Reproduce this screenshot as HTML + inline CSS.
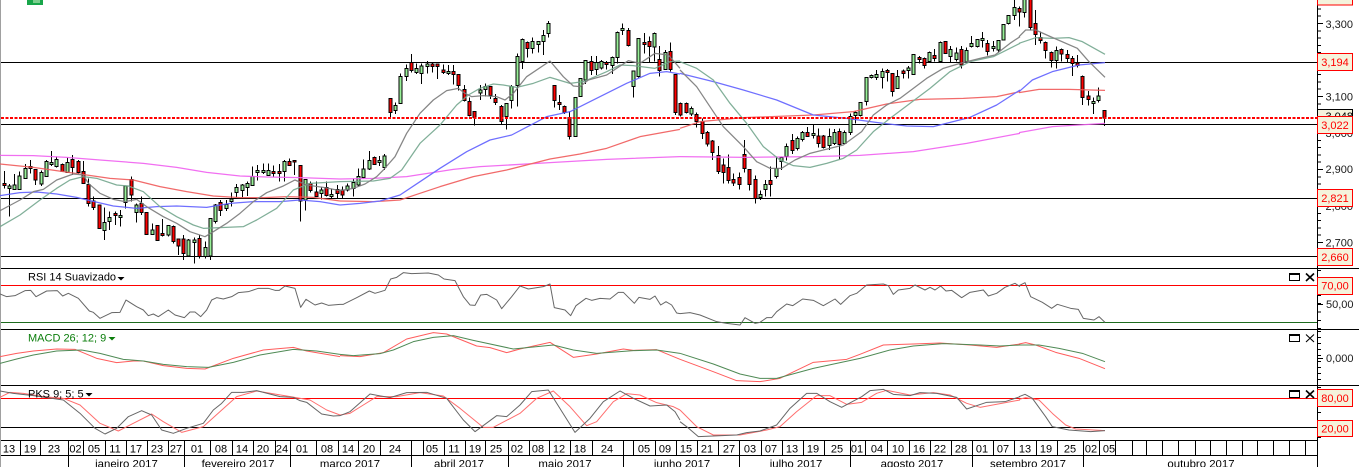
<!DOCTYPE html>
<html><head><meta charset="utf-8"><title>Chart</title>
<style>
html,body{margin:0;padding:0;background:#fff;width:1359px;height:467px;overflow:hidden}
svg{display:block;font-family:"Liberation Sans",sans-serif;font-size:11px}
.w{stroke:#000;stroke-width:3;fill:none;shape-rendering:crispEdges}
.r{fill:#ff0000;stroke:#000;stroke-width:3;shape-rendering:crispEdges}
.g{fill:#98f098;stroke:#000;stroke-width:3;shape-rendering:crispEdges}
polyline{fill:none;stroke-width:3;stroke-linejoin:round}
.k,.n,.b,.d,.m{stroke-width:3.8}
.k{stroke:#7a7a7a}.n{stroke:#74a78e}.b{stroke:#6060ff}.d{stroke:#f05a5a}.m{stroke:#f060f0}
.rl{stroke:#666}.mg{stroke:#4f8a55}.mr{stroke:#ff5c5c}.pk{stroke:#666}.pr{stroke:#ff6e6e}
.c{shape-rendering:crispEdges}
.lb{fill:#f5f3dc;stroke:#f00;stroke-width:1;shape-rendering:crispEdges}
.lt{fill:#f00;text-anchor:middle}
.ax{fill:#1a1a1a}
.dl text{text-anchor:middle;fill:#000}
</style></head><body>
<svg width="1359" height="467" viewBox="0 0 1359 467" xmlns="http://www.w3.org/2000/svg">
<rect width="1359" height="467" fill="#fff"/>
<rect x="0" y="0" width="1" height="467" fill="#a0a0a0"/>
<rect x="27" y="0" width="16" height="5" fill="#18a64a"/><rect x="33" y="0" width="7" height="3" fill="#7ccf8e"/>

<!-- horizontal levels -->
<g class="c" stroke="#000" stroke-width="1">
<path d="M1 62.5H1317M1 124.5H1317M1 198.5H1317M1 256.5H1317"/>
<path d="M1 268.5H1359M1 329.5H1359M1 385.5H1359M1 440.5H1317M1 455.5H1317"/>
<path d="M1 427.5H1317"/>
</g>
<path class="c" d="M1 285.5H1317M1 398.5H1317" stroke="#f00" stroke-width="1"/>
<path class="c" d="M1 322.5H1317" stroke="#1d6b1d" stroke-width="1"/>

<!-- group 1 candles -->
<g transform="translate(0,0) scale(.33333)">
<path class="w" d="M13 513V565M28 552V650M43 522V570M58 515V570M76 492V535M91 480V520M106 508V555M124 512V558M139 480V530M154 453V498M169 470V503M187 490V515M202 472V518M217 465V525M235 480V520M250 483V550M265 535V620M280 590V630M298 615V685M313 623V720M328 635V690M346 635V675M361 630V680M376 558V625M394 530V605M409 610V668M424 590V645M439 636V705M457 670V705M472 675V722M487 657V710M505 675V710M520 677V730M535 717V765M550 705V780M565 717V770M583 712V790M598 705V775M616 725V775M631 655V780M646 612V670M661 600V648M679 600V633M694 578V620M709 552V592M727 552V592M742 545V588M757 500V558M772 495V542M790 490V522M805 490V528M820 496V530M838 492V545M853 480V545M868 475V497M883 480V525M901 495V665M916 537V632M931 545V578M949 545V590M964 562V598M979 545V590M994 565V595M1012 555V595M1027 560V595M1042 550V575M1060 535V590M1075 505V560M1091 478V535"/>
<path class="r" d="M13 550h-4.5V557h9V550zM91 499h-4.5V505h9V499zM106 508h-4.5V540h9V508zM187 493h-4.5V515h9V493zM217 478h-4.5V503h9V478zM235 484h-4.5V518h9V484zM250 515h-4.5V550h9V515zM265 553h-4.5V610h9V553zM280 603h-4.5V623h9V603zM298 615h-4.5V685h9V615zM346 640h-4.5V647h9V640zM394 538h-4.5V585h9V538zM424 610h-4.5V638h9V610zM439 637h-4.5V703h9V637zM472 676h-4.5V722h9V676zM487 700h-4.5V707h9V700zM520 679h-4.5V725h9V679zM535 717h-4.5V738h9V717zM550 717h-4.5V760h9V717zM598 715h-4.5V770h9V715zM661 607h-4.5V632h9V607zM820 514h-4.5V521h9V514zM838 514h-4.5V520h9V514zM868 484h-4.5V496h9V484zM883 481h-4.5V486h9V481zM901 496h-4.5V603h9V496zM931 550h-4.5V572h9V550zM949 576h-4.5V590h9V576zM979 562h-4.5V587h9V562zM1012 568h-4.5V580h9V568zM1027 570h-4.5V585h9V570z"/>
<path class="g" d="M28 558h-4.5V566h9V558zM43 555h-4.5V568h9V555zM58 528h-4.5V568h9V528zM76 505h-4.5V535h9V505zM124 518h-4.5V552h9V518zM139 484h-4.5V530h9V484zM154 487h-4.5V494h9V487zM169 478h-4.5V500h9V478zM202 487h-4.5V517h9V487zM313 667h-4.5V692h9V667zM328 652h-4.5V665h9V652zM361 646h-4.5V653h9V646zM376 558h-4.5V608h9V558zM409 615h-4.5V638h9V615zM457 690h-4.5V703h9V690zM505 676h-4.5V705h9V676zM565 720h-4.5V768h9V720zM583 720h-4.5V727h9V720zM616 742h-4.5V770h9V742zM631 655h-4.5V768h9V655zM646 615h-4.5V665h9V615zM679 614h-4.5V626h9V614zM694 597h-4.5V605h9V597zM709 562h-4.5V578h9V562zM727 555h-4.5V571h9V555zM742 550h-4.5V563h9V550zM757 530h-4.5V556h9V530zM772 511h-4.5V518h9V511zM790 511h-4.5V518h9V511zM805 511h-4.5V526h9V511zM853 484h-4.5V515h9V484zM916 538h-4.5V600h9V538zM964 570h-4.5V581h9V570zM994 583h-4.5V590h9V583zM1042 558h-4.5V570h9V558zM1060 548h-4.5V565h9V548zM1075 530h-4.5V555h9V530zM1091 507h-4.5V532h9V507z"/>
</g>

<!-- group 2 candles -->
<g transform="translate(340,0) scale(.33333)">
<path class="w" d="M88 453V510M103 470V495M118 468V498M133 462V510M151 295V352M166 308V342M181 220V312M199 193V243M214 162V218M229 190V222M244 190V252M262 183V220M277 188V217M292 190V237M310 193V222M325 195V225M340 195V253M355 222V272M373 255V305M388 292V350M403 334V377M421 255V300M436 250V290M451 258V297M466 282V315M484 315V372M499 310V388M514 255V325M532 160V320M547 115V207M562 125V173M577 113V160M595 123V158M610 90V165M625 63V112M643 255V322M658 285V330M673 316V342M688 335V418M706 292V410M721 235V290M736 180V252M754 168V225M769 168V225M784 180V208M799 183V208M817 170V222M832 95V190M847 70V105M865 84V140M880 212V293M895 115V232M913 99V160M928 110V187M943 98V185M958 138V230M976 150V210M991 127V215M1006 222V345"/>
<path class="r" d="M103 472h-4.5V493h9V472zM151 295h-4.5V338h9V295zM214 188h-4.5V212h9V188zM277 192h-4.5V200h9V192zM292 192h-4.5V200h9V192zM310 210h-4.5V218h9V210zM340 214h-4.5V223h9V214zM355 224h-4.5V257h9V224zM373 268h-4.5V302h9V268zM388 304h-4.5V347h9V304zM403 334h-4.5V352h9V334zM451 259h-4.5V287h9V259zM466 295h-4.5V307h9V295zM484 319h-4.5V365h9V319zM562 127h-4.5V146h9V127zM643 256h-4.5V302h9V256zM658 307h-4.5V314h9V307zM673 319h-4.5V338h9V319zM688 352h-4.5V410h9V352zM754 184h-4.5V212h9V184zM799 188h-4.5V193h9V188zM865 91h-4.5V137h9V91zM913 127h-4.5V134h9V127zM928 124h-4.5V140h9V124zM958 178h-4.5V212h9V178zM991 154h-4.5V209h9V154zM1006 223h-4.5V338h9V223z"/>
<path class="g" d="M88 481h-4.5V507h9V481zM118 481h-4.5V488h9V481zM133 468h-4.5V503h9V468zM166 316h-4.5V332h9V316zM181 229h-4.5V310h9V229zM199 205h-4.5V230h9V205zM229 205h-4.5V218h9V205zM244 198h-4.5V221h9V198zM262 192h-4.5V200h9V192zM325 214h-4.5V221h9V214zM421 270h-4.5V279h9V270zM436 259h-4.5V269h9V259zM499 310h-4.5V350h9V310zM514 259h-4.5V301h9V259zM532 169h-4.5V257h9V169zM547 118h-4.5V185h9V118zM577 124h-4.5V146h9V124zM595 124h-4.5V134h9V124zM610 106h-4.5V124h9V106zM625 70h-4.5V101h9V70zM706 292h-4.5V410h9V292zM721 236h-4.5V290h9V236zM736 182h-4.5V240h9V182zM769 187h-4.5V209h9V187zM784 184h-4.5V204h9V184zM817 172h-4.5V197h9V172zM832 97h-4.5V172h9V97zM847 85h-4.5V92h9V85zM880 213h-4.5V260h9V213zM895 115h-4.5V230h9V115zM943 100h-4.5V141h9V100zM976 157h-4.5V208h9V157z"/>
</g>

<!-- group 3 candles -->
<g transform="translate(680,0) scale(.33333)">
<path class="w" d="M1 308V350M19 308V340M34 320V348M49 337V383M67 355V417M82 393V440M97 420V480M115 438V522M130 475V550M145 463V550M160 520V558M178 517V568M193 420V518M208 508V572M226 527V610M241 572V600M256 540V590M271 500V590M289 470V535M304 470V510M319 430V482M337 402V462M352 410V452M367 393V425M382 381V410M400 373V415M415 385V443M430 405V445M448 385V450M463 387V435M478 385V478M493 392V432M511 340V405M526 335V370M541 307V350M559 232V317M574 223V236M589 210V240M607 205V265M622 207V245M637 220V290M652 210V265M670 208V235M685 198V235M700 163V223M718 168V190M733 172V206M748 155V187M763 147V185M781 125V187M796 124V162M811 138V187M829 143V185M844 138V205M859 142V185M874 108V142M892 118V142M907 96V142M922 120V167M940 123V155M955 120V158M970 73V122M985 45V73M1003 0V60M1018 20V80"/>
<path class="r" d="M1 310h-4.5V345h9V310zM19 310h-4.5V337h9V310zM49 343h-4.5V365h9V343zM67 365h-4.5V400h9V365zM82 397h-4.5V432h9V397zM97 423h-4.5V458h9V423zM115 467h-4.5V515h9V467zM130 495h-4.5V517h9V495zM145 502h-4.5V542h9V502zM160 538h-4.5V549h9V538zM178 532h-4.5V554h9V532zM193 463h-4.5V505h9V463zM208 508h-4.5V553h9V508zM226 538h-4.5V595h9V538zM271 541h-4.5V553h9V541zM337 421h-4.5V451h9V421zM382 397h-4.5V409h9V397zM415 408h-4.5V430h9V408zM430 408h-4.5V443h9V408zM478 394h-4.5V434h9V394zM622 211h-4.5V217h9V211zM637 220h-4.5V275h9V220zM670 213h-4.5V220h9V213zM718 172h-4.5V178h9V172zM733 175h-4.5V197h9V175zM763 166h-4.5V176h9V166zM796 124h-4.5V160h9V124zM844 148h-4.5V195h9V148zM922 130h-4.5V155h9V130zM1018 26h-4.5V36h9V26z"/>
<path class="g" d="M34 325h-4.5V342h9V325zM241 583h-4.5V593h9V583zM256 553h-4.5V568h9V553zM289 505h-4.5V530h9V505zM304 473h-4.5V484h9V473zM319 439h-4.5V470h9V439zM352 415h-4.5V445h9V415zM367 397h-4.5V419h9V397zM400 400h-4.5V407h9V400zM448 410h-4.5V436h9V410zM463 397h-4.5V430h9V397zM493 397h-4.5V431h9V397zM511 349h-4.5V398h9V349zM526 337h-4.5V347h9V337zM541 307h-4.5V347h9V307zM559 232h-4.5V305h9V232zM574 226h-4.5V233h9V226zM589 223h-4.5V233h9V223zM607 214h-4.5V233h9V214zM652 229h-4.5V265h9V229zM685 204h-4.5V211h9V204zM700 163h-4.5V223h9V163zM748 157h-4.5V185h9V157zM781 127h-4.5V185h9V127zM811 148h-4.5V170h9V148zM829 159h-4.5V179h9V159zM859 151h-4.5V185h9V151zM874 130h-4.5V139h9V130zM892 118h-4.5V139h9V118zM907 115h-4.5V121h9V115zM940 139h-4.5V146h9V139zM955 121h-4.5V150h9V121zM970 73h-4.5V120h9V73zM985 46h-4.5V70h9V46zM1003 22h-4.5V46h9V22z"/>
</g>

<!-- group 4 candles -->
<g transform="translate(1019,0) scale(.33333)">
<path class="w" d="M16 0V52M34 0V92M49 30V135M64 95V130M79 125V175M97 155V203M112 140V205M127 145V185M145 150V187M160 168V228M175 165V203M190 226V315M208 273V317M223 292V342M238 262V308M256 330V378"/>
<path class="r" d="M34 -5h-4.5V83h9V-5zM49 70h-4.5V103h9V70zM64 112h-4.5V122h9V112zM79 127h-4.5V152h9V127zM97 157h-4.5V182h9V157zM127 148h-4.5V162h9V148zM145 163h-4.5V176h9V163zM160 175h-4.5V190h9V175zM175 189h-4.5V197h9V189zM190 229h-4.5V292h9V229zM208 288h-4.5V299h9V288zM256 331h-4.5V354h9V331z"/>
<path class="g" d="M16 -5h-4.5V38h9V-5zM112 152h-4.5V182h9V152zM223 304h-4.5V311h9V304zM238 288h-4.5V302h9V288z"/>
</g>

<!-- moving averages -->
<g transform="translate(0,0) scale(.33333)" opacity=".9">
<polyline class="m" points="0,466 100,467 200,472 300,480 430,490 530,502 620,517 720,528 800,531 900,533 1020,537"/>
<polyline class="d" points="0,492 100,502 190,515 260,525 330,535 400,540 480,560 560,575 640,588 720,593 790,593 860,590 940,592 1020,603"/>
<polyline class="b" points="0,587 60,578 110,576 170,582 230,592 270,602 340,618 410,625 470,620 530,618 620,622 690,610 760,605 840,605 900,600 960,605 1020,615"/>
<polyline class="n" points="0,680 60,645 120,600 170,565 210,540 250,530 290,535 350,555 385,558 430,575 480,620 530,650 580,675 610,685 660,683 730,680 770,660 830,625 880,570 930,550 1020,545"/>
<polyline class="k" points="0,632 60,600 100,575 130,568 170,540 220,522 250,525 265,550 300,580 340,598 375,605 410,598 440,620 490,650 530,670 570,695 615,710 640,695 680,670 720,640 760,605 800,578 850,558 885,540 920,555 970,562 1020,572"/>
</g>
<g transform="translate(340,0) scale(.33333)" opacity=".9">
<polyline class="m" points="0,537 100,535 200,530 340,508 420,500 630,488 800,478 1020,470"/>
<polyline class="d" points="0,603 100,605 180,600 240,580 300,560 400,530 500,510 630,477 720,462 800,445 900,410 1020,388"/>
<polyline class="b" points="0,615 60,610 120,603 180,585 240,545 300,505 380,455 450,420 515,405 620,350 690,335 740,310 800,280 860,250 930,220 980,215 1020,222"/>
<polyline class="n" points="0,545 100,543 150,535 185,510 240,430 300,375 350,315 385,285 420,265 460,252 490,255 530,262 580,250 630,232 690,250 730,245 800,215 840,195 880,197 945,205 990,185 1020,183"/>
<polyline class="k" points="0,572 40,565 75,552 110,530 130,510 165,470 200,400 240,340 280,300 320,272 355,265 375,280 395,290 430,287 470,290 495,300 520,280 560,230 630,183 670,230 700,258 720,260 745,240 800,225 830,205 865,182 900,190 945,160 985,165 1020,205"/>
</g>
<g transform="translate(680,0) scale(.33333)" opacity=".9">
<polyline class="m" points="0,470 200,472 400,470 540,466 700,455 860,430 1020,400"/>
<polyline class="d" points="0,385 60,365 190,353 400,345 520,335 620,312 720,298 850,295 950,290 1020,275"/>
<polyline class="b" points="0,220 100,245 190,270 290,300 400,345 500,355 610,370 680,378 760,380 870,352 950,315 1020,270"/>
<polyline class="n" points="0,185 50,205 100,240 150,310 200,370 250,440 300,480 340,497 390,502 440,490 490,475 530,450 580,395 630,355 690,310 750,265 810,215 870,185 940,170 970,155 1020,130"/>
<polyline class="k" points="0,210 50,260 90,320 130,380 190,440 230,485 270,505 305,505 345,480 390,460 430,450 490,435 545,395 580,345 620,315 660,295 700,265 740,235 790,205 840,190 900,175 945,165 990,130 1020,110"/>
</g>
<g transform="translate(1019,0) scale(.33333)" opacity=".9">
<polyline class="m" points="0,398 100,380 258,370"/>
<polyline class="d" points="0,278 60,268 150,268 258,271"/>
<polyline class="b" points="0,275 40,240 100,215 180,195 258,188"/>
<polyline class="n" points="0,130 50,113 100,115 150,113 190,125 258,163"/>
<polyline class="k" points="0,110 20,90 50,90 90,108 175,145 210,185 258,232"/>
</g>

<!-- dotted level -->
<path class="c" d="M1 118H1317" stroke="#f00" stroke-width="2" stroke-dasharray="3 1.5"/>

<!-- RSI -->
<g transform="translate(0,265) scale(.33333)"><polyline class="rl" points="0,87 20,95 45,92 75,77 92,76 108,95 140,78 172,77 188,93 205,85 235,100 268,138 280,142 300,160 335,143 360,142 378,105 410,125 430,135 445,152 460,147 475,155 505,135 525,150 553,158 570,141 585,141 602,155 620,135 635,105 650,98 670,102 695,95 715,83 745,80 775,70 805,70 825,76 838,76 855,63 885,70 902,127 918,103 945,120 965,114 985,121 1020,118"/></g>
<g transform="translate(340,265) scale(.33333)"><polyline class="rl" points="0,118 10,118 50,98 88,78 105,85 135,76 152,42 170,37 190,23 215,26 265,24 295,30 312,42 345,47 370,95 390,120 405,121 422,90 440,88 470,105 485,131 515,95 540,63 565,72 610,65 630,57 643,128 675,135 692,152 708,122 738,100 755,106 780,100 810,102 835,82 850,82 883,115 897,97 930,103 945,93 962,120 978,110 995,120 1010,144 1020,146"/></g>
<g transform="translate(680,265) scale(.33333)"><polyline class="rl" points="0,146 30,143 60,150 110,170 140,175 180,180 195,158 225,175 240,172 260,158 275,158 290,140 320,117 338,122 368,102 400,106 430,122 465,102 482,118 510,92 530,85 560,60 610,57 625,62 640,88 655,75 690,70 705,60 735,75 750,67 765,75 782,63 798,78 815,76 845,98 870,82 910,75 925,93 950,85 975,67 1005,55 1020,65"/></g>
<g transform="translate(1019,265) scale(.33333)"><polyline class="rl" points="0,62 18,53 35,95 70,112 98,130 115,118 155,130 178,133 193,160 225,165 240,155 258,172"/></g>

<!-- MACD -->
<g transform="translate(0,265) scale(.33333)">
<polyline class="mr" points="0,275 50,265 100,258 170,252 225,253 290,280 350,293 400,288 430,288 490,302 560,310 615,312 700,280 790,255 880,247 920,258 1020,275"/>
<polyline class="mg" points="0,295 50,282 100,270 170,258 245,255 300,265 370,283 430,288 490,298 560,305 625,307 700,292 780,270 880,253 950,258 1020,268"/>
</g>
<g transform="translate(340,265) scale(.33333)">
<polyline class="mr" points="0,272 60,275 130,263 200,222 280,203 320,207 410,243 450,248 500,263 540,252 630,232 700,277 770,267 850,252 880,256 950,254 1020,283"/>
<polyline class="mg" points="0,268 40,272 120,266 160,255 220,230 280,217 340,212 400,226 520,252 640,240 700,255 770,265 840,260 880,257 950,255 1020,265"/>
</g>
<g transform="translate(680,265) scale(.33333)">
<polyline class="mr" points="0,283 100,320 170,347 240,350 300,340 400,292 500,283 540,268 610,240 700,237 780,234 870,240 950,247 1020,237"/>
<polyline class="mg" points="0,265 100,297 180,327 240,340 290,340 400,310 540,280 630,255 700,243 790,236 900,240 960,243 1020,240"/>
</g>
<g transform="translate(1019,265) scale(.33333)">
<polyline class="mr" points="0,237 20,233 50,240 110,262 180,280 258,311"/>
<polyline class="mg" points="0,240 60,240 120,250 190,265 258,290"/>
</g>

<!-- PKS -->
<g transform="translate(0,265) scale(.33333)">
<polyline class="pr" points="0,397 30,382 70,385 130,395 190,400 240,420 300,475 355,498 400,475 455,447 490,470 545,502 610,485 660,440 710,395 770,378 860,393 930,405 980,435 1020,450"/>
<polyline class="pk" points="0,378 40,385 100,392 190,405 240,445 285,490 315,507 350,490 385,455 425,437 455,450 485,495 520,505 560,490 610,475 640,435 665,415 695,382 730,382 770,377 840,395 880,397 900,407 920,412 965,447 1000,453 1020,452"/>
</g>
<g transform="translate(340,265) scale(.33333)">
<polyline class="pr" points="0,450 30,445 70,420 110,395 170,395 240,383 310,393 360,430 430,487 460,487 540,445 590,400 640,378 690,425 740,482 770,470 820,410 860,386 900,390 950,413 1000,425 1020,435"/>
<polyline class="pk" points="0,452 30,440 90,387 150,398 200,383 260,382 320,400 370,465 405,500 470,452 500,455 540,420 575,380 625,375 705,502 750,460 790,410 840,378 880,400 930,423 980,420 1005,440 1020,465"/>
</g>
<g transform="translate(680,265) scale(.33333)">
<polyline class="pr" points="0,435 50,485 100,510 180,510 260,495 300,485 350,440 410,392 450,392 500,418 545,412 590,385 620,376 690,390 760,383 810,390 860,415 900,427 1020,405"/>
<polyline class="pk" points="0,470 20,485 55,515 100,513 170,510 200,503 240,498 290,480 330,430 380,385 410,385 450,410 485,427 545,395 570,377 610,373 640,388 690,392 720,383 770,385 830,397 860,432 920,412 975,410 1020,395"/>
</g>
<g transform="translate(1019,265) scale(.33333)">
<polyline class="pr" points="0,403 20,398 60,405 100,445 140,480 170,492 258,497"/>
<polyline class="pk" points="0,395 18,388 40,400 80,455 100,485 150,495 215,500 258,497"/>
</g>

<!-- panel titles -->
<text x="28" y="280.5" fill="#000">RSI 14 Suavizado</text>
<path d="M117.5 277h7l-3.5 3.5z" fill="#000"/>
<text x="28" y="341.5" fill="#0a7d0a">MACD 26; 12; 9</text>
<path d="M108.5 337h7l-3.5 3.5z" fill="#0a7d0a"/>
<text x="28" y="397.5" fill="#000">PKS 9; 5; 5</text>
<path d="M85.5 393h7l-3.5 3.5z" fill="#000"/>

<!-- window buttons -->
<g class="c" fill="none" stroke="#000">
<rect x="1289.5" y="273.5" width="10" height="7"/><path d="M1290 274.5H1299"/>
<rect x="1289.5" y="334.5" width="10" height="7"/><path d="M1290 335.5H1299"/>
<rect x="1289.5" y="390.5" width="10" height="7"/><path d="M1290 391.5H1299"/>
</g>
<g fill="none" stroke="#000">
<path d="M1306 273.5L1314 281M1314 273.5L1306 281" stroke-width="1.6"/>
<path d="M1306 334.5L1314 342M1314 334.5L1306 342" stroke-width="1.1"/>
<path d="M1306 390.5L1314 398M1314 390.5L1306 398" stroke-width="1.6"/>
</g>

<!-- axis -->
<path class="c" d="M1317.5 0V467" stroke="#000" stroke-width="1"/>
<g class="c" stroke="#000">
<line x1="1319.5" x2="1319.5" y1="1.1" y2="266" stroke-width="3" stroke-dasharray="1 6.3"/>
<line x1="1319.5" x2="1319.5" y1="270" y2="329" stroke-width="3" stroke-dasharray="1 7.3"/>
<line x1="1319.5" x2="1319.5" y1="331" y2="385" stroke-width="3" stroke-dasharray="1 5"/>
<line x1="1319.5" x2="1319.5" y1="387" y2="438" stroke-width="3" stroke-dasharray="1 7.3"/>
<path d="M1318 23.5H1323M1318 96.5H1323M1318 169.5H1323M1318 242.5H1323M1318 304.5H1323M1318 358.5H1323"/>
</g>
<g class="ax">
<text x="1325.5" y="28">3,300</text>
<text x="1325.5" y="100.5">3,100</text>
<text x="1325.5" y="137">3,000</text>
<text x="1325.5" y="173">2,900</text>
<text x="1325.5" y="210">2,800</text>
<text x="1325.5" y="246.5">2,700</text>
<text x="1326" y="308">50,00</text>
<text x="1326" y="362">0,000</text>
</g>
<rect x="1317.5" y="109.5" width="35" height="18" fill="#f5f3dc" stroke="#000" class="c"/>
<text x="1325.5" y="120" fill="#000">3,048</text>

<g>
<rect class="lb" x="1317.5" y="-5.5" width="35" height="10.5"/>
<rect class="lb" x="1317.5" y="53.5" width="35" height="17"/><text class="lt" x="1335" y="66">3,194</text>
<rect class="lb" x="1317.5" y="116.5" width="35" height="17"/><text class="lt" x="1335" y="129">3,022</text>
<rect class="lb" x="1317.5" y="189.5" width="35" height="17"/><text class="lt" x="1335" y="202">2,821</text>
<rect class="lb" x="1317.5" y="248.5" width="35" height="17"/><text class="lt" x="1335" y="261">2,660</text>
<rect class="lb" x="1317.5" y="277.5" width="35" height="17"/><text class="lt" x="1335" y="289.5">70,00</text>
<rect class="lb" x="1317.5" y="389.5" width="35" height="17"/><text class="lt" x="1335" y="402">80,00</text>
<rect class="lb" x="1317.5" y="420.5" width="35" height="16"/><text class="lt" x="1335" y="432.5">20,00</text>
</g>

<!-- time axis -->
<path class="c" stroke="#000" stroke-width="1" d="M20.5 441V455M40.5 441V455M68.5 441V467M83.5 441V455M105.5 441V455M126.5 441V455M147.5 441V455M168.5 441V455M184.5 441V467M210.5 441V455M232.5 441V455M253.5 441V455M275.5 441V455M290.5 441V467M316.5 441V455M338.5 441V455M358.5 441V455M380.5 441V455M411.5 441V467M423.5 441V455M444.5 441V455M465.5 441V455M485.5 441V455M508.5 441V467M529.5 441V455M549.5 441V455M570.5 441V455M592.5 441V455M623.5 441V467M633.5 441V455M655.5 441V455M676.5 441V455M697.5 441V455M718.5 441V455M739.5 441V467M761.5 441V455M782.5 441V455M803.5 441V455M824.5 441V455M850.5 441V467M865.5 441V455M887.5 441V455M909.5 441V455M930.5 441V455M951.5 441V455M972.5 441V467M993.5 441V455M1014.5 441V455M1036.5 441V455M1057.5 441V455M1083.5 441V467M1099.5 441V455M1115.5 441V455M1132.5 441V455M1146.5 441V455M1162.5 441V455M1178.5 441V455M1195.5 441V455M1210.5 441V455M1226.5 441V455M1242.5 441V455M1257.5 441V455M1273.5 441V455M1289.5 441V455M1305.5 441V455"/>
<g class="dl">
<text x="9" y="452.5">13</text><text x="30" y="452.5">19</text><text x="54" y="452.5">23</text><text x="75.5" y="452.5">02</text><text x="94" y="452.5">05</text><text x="115" y="452.5">11</text><text x="136" y="452.5">17</text><text x="157" y="452.5">23</text><text x="176" y="452.5">27</text><text x="197" y="452.5">01</text><text x="221" y="452.5">08</text><text x="242" y="452.5">14</text><text x="263" y="452.5">20</text><text x="282" y="452.5">24</text><text x="302" y="452.5">01</text><text x="327" y="452.5">08</text><text x="348" y="452.5">14</text><text x="369" y="452.5">20</text><text x="395" y="452.5">24</text><text x="432" y="452.5">05</text><text x="454" y="452.5">11</text><text x="475" y="452.5">19</text><text x="496" y="452.5">25</text><text x="517" y="452.5">02</text><text x="538" y="452.5">08</text><text x="559" y="452.5">12</text><text x="580" y="452.5">18</text><text x="607" y="452.5">24</text><text x="644" y="452.5">05</text><text x="665" y="452.5">09</text><text x="686" y="452.5">15</text><text x="707" y="452.5">21</text><text x="729" y="452.5">27</text><text x="750" y="452.5">03</text><text x="771" y="452.5">07</text><text x="792" y="452.5">13</text><text x="813" y="452.5">19</text><text x="837" y="452.5">25</text><text x="857" y="452.5">01</text><text x="877" y="452.5">04</text><text x="898" y="452.5">10</text><text x="919" y="452.5">16</text><text x="940" y="452.5">22</text><text x="961" y="452.5">28</text><text x="982" y="452.5">01</text><text x="1003" y="452.5">07</text><text x="1025" y="452.5">13</text><text x="1046" y="452.5">19</text><text x="1070" y="452.5">25</text><text x="1091" y="452.5">02</text><text x="1109" y="452.5">05</text>
</g>
<g class="dl" font-size="11.4">
<text x="126.5" y="467.5">janeiro 2017</text><text x="238" y="467.5">fevereiro 2017</text><text x="350" y="467.5">março 2017</text><text x="459" y="467.5">abril 2017</text><text x="565" y="467.5">maio 2017</text><text x="682" y="467.5">junho 2017</text><text x="796" y="467.5">julho 2017</text><text x="912" y="467.5">agosto 2017</text><text x="1028" y="467.5">setembro 2017</text><text x="1201" y="467.5">outubro 2017</text>
</g>
</svg>
</body></html>
